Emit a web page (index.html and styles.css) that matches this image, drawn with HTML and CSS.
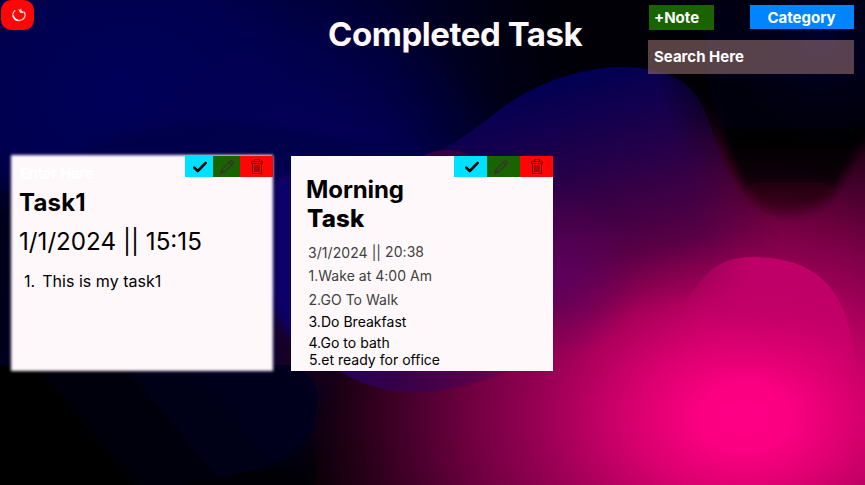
FILE: index.html
```
<!DOCTYPE html>
<html lang="en">
<head>
<meta charset="utf-8">
<title>Completed Task</title>
<link rel="stylesheet" href="styles.css">
</head>
<body>
<svg class="backdrop" viewBox="0 0 865 485" preserveAspectRatio="none" aria-hidden="true">
  <defs>
    <radialGradient id="blue" gradientUnits="userSpaceOnUse" cx="130" cy="95" r="450" gradientTransform="translate(0 20) scale(1 .8)">
      <stop offset="0" stop-color="#00005a"/><stop offset=".3" stop-color="#000050"/><stop offset=".6" stop-color="#000040" stop-opacity=".75"/><stop offset="1" stop-color="#000030" stop-opacity="0"/>
    </radialGradient>
    <radialGradient id="mid" gradientUnits="userSpaceOnUse" cx="300" cy="235" r="240">
      <stop offset="0" stop-color="#0c0068"/><stop offset=".4" stop-color="#04005a"/><stop offset="1" stop-color="#000050" stop-opacity="0"/>
    </radialGradient>
    <radialGradient id="pink" gradientUnits="userSpaceOnUse" cx="745" cy="0" r="460" gradientTransform="translate(0 418) scale(1 .72)">
      <stop offset="0" stop-color="#ff0084"/><stop offset=".1" stop-color="#fb0081"/><stop offset=".24" stop-color="#d8006e"/><stop offset=".44" stop-color="#9a0055"/><stop offset=".58" stop-color="#750043"/><stop offset=".7" stop-color="#500031"/><stop offset=".83" stop-color="#2a001a"/><stop offset="1" stop-color="#080006" stop-opacity="0"/>
    </radialGradient>
    <linearGradient id="wave" gradientUnits="userSpaceOnUse" x1="560" y1="82" x2="625" y2="320">
      <stop offset="0" stop-color="#020052"/><stop offset=".3" stop-color="#1e004b"/><stop offset=".55" stop-color="#3c0044"/><stop offset=".75" stop-color="#520046" stop-opacity=".8"/><stop offset="1" stop-color="#80004e" stop-opacity="0"/>
    </linearGradient>
    <linearGradient id="wavefade" gradientUnits="userSpaceOnUse" x1="680" y1="155" x2="750" y2="132">
      <stop offset="0" stop-color="#fff"/><stop offset="1" stop-color="#000"/>
    </linearGradient>
    <mask id="wavemask" maskUnits="userSpaceOnUse" x="300" y="50" width="565" height="350"><rect x="300" y="50" width="565" height="350" fill="url(#wavefade)"/></mask>
    <linearGradient id="tail" gradientUnits="userSpaceOnUse" x1="290" y1="320" x2="540" y2="350">
      <stop offset="0" stop-color="#12005e"/><stop offset=".45" stop-color="#36004a"/><stop offset=".75" stop-color="#500050" stop-opacity=".7"/><stop offset="1" stop-color="#780050" stop-opacity="0"/>
    </linearGradient>
    <radialGradient id="violet" gradientUnits="userSpaceOnUse" cx="555" cy="275" r="85">
      <stop offset="0" stop-color="#5c0064" stop-opacity=".8"/><stop offset="1" stop-color="#5c0060" stop-opacity="0"/>
    </radialGradient>
    <linearGradient id="dome" gradientUnits="userSpaceOnUse" x1="760" y1="257" x2="755" y2="370">
      <stop offset="0" stop-color="#be0068"/><stop offset=".5" stop-color="#c5006a" stop-opacity=".85"/><stop offset="1" stop-color="#e60078" stop-opacity="0"/>
    </linearGradient>
    <linearGradient id="domefade" gradientUnits="userSpaceOnUse" x1="665" y1="0" x2="750" y2="0">
      <stop offset="0" stop-color="#000"/><stop offset="1" stop-color="#fff"/>
    </linearGradient>
    <mask id="domemask" maskUnits="userSpaceOnUse" x="640" y="240" width="240" height="150"><rect x="640" y="240" width="240" height="150" fill="url(#domefade)"/></mask>
    <linearGradient id="navy" gradientUnits="userSpaceOnUse" x1="80" y1="470" x2="210" y2="360">
      <stop offset="0" stop-color="#000001"/><stop offset="1" stop-color="#00001d"/>
    </linearGradient>
    <linearGradient id="night" gradientUnits="userSpaceOnUse" x1="790" y1="60" x2="790" y2="216">
      <stop offset="0" stop-color="#000016"/><stop offset=".45" stop-color="#000006"/><stop offset=".7" stop-color="#040004" stop-opacity=".85"/><stop offset="1" stop-color="#140008" stop-opacity=".4"/>
    </linearGradient>
    <radialGradient id="corner" gradientUnits="userSpaceOnUse" cx="820" cy="40" r="110">
      <stop offset="0" stop-color="#000030"/><stop offset="1" stop-color="#000008" stop-opacity="0"/>
    </radialGradient>
    <filter id="b1"><feGaussianBlur stdDeviation=".7"/></filter>
    <filter id="b4" x="-20%" y="-20%" width="140%" height="140%"><feGaussianBlur stdDeviation="5"/></filter>
    <filter id="b12" x="-50%" y="-50%" width="200%" height="200%"><feGaussianBlur stdDeviation="14"/></filter>
  </defs>
  <rect width="865" height="485" fill="#000006"/>
  <rect width="865" height="485" fill="url(#blue)"/>
  <rect width="560" height="485" fill="url(#mid)"/>
  <path d="M-30 210Q120 110 240 122Q330 130 430 160L400 330Q340 380 280 370L-30 380Z" fill="#000048" fill-opacity=".8" filter="url(#b4)"/>
  <path d="M-20 190H25V380H-20Z" fill="#000014" filter="url(#b12)"/>
  <path d="M272 180L300 170V360L272 320Z" fill="#100068" filter="url(#b4)"/>
  <path d="M272 300Q285 350 340 380L272 395Z" fill="#190026" filter="url(#b4)"/>
  <path d="M325 370H600V510H325Z" fill="#150010" filter="url(#b12)"/>
  <rect width="865" height="485" fill="url(#pink)"/>
  <path d="M425 157C465 142 480 121 520 96C560 73 600 66 625 67C668 68 690 82 701 103C715 132 725 181 752 207C780 225 785 260 780 340H510L330 365V155Z" fill="url(#wave)" mask="url(#wavemask)"/>
  <rect x="460" y="180" width="200" height="200" fill="url(#violet)"/>
  <path d="M423 156Q446 144 472 156Z" fill="#350042" filter="url(#b1)"/>
  <path d="M290 330H560V350C500 375 450 396 405 392C370 389 346 377 330 365Z" fill="url(#tail)" filter="url(#b1)"/>
  <path d="M705 66C716 108 726 168 752 200C770 221 805 215 825 202C845 185 855 145 880 125V0H705Z" fill="url(#night)" filter="url(#b4)"/>
  <rect x="700" width="165" height="190" fill="url(#corner)"/>
  <path d="M665 375C680 315 693 257 752 257C813 257 835 286 846 317Q853 342 858 380Z" fill="url(#dome)" mask="url(#domemask)"/>
  <path d="M-10 365H290Q322 376 317 405C315 435 295 458 262 468Q235 476 200 480L140 500H-10Z" fill="url(#navy)" filter="url(#b1)"/>
</svg>

<svg class="symbols" aria-hidden="true">
  <symbol id="check" viewBox="0 0 14 12"><path d="M1.3 6.6 4.8 10 12.7 1.9" fill="none" stroke="#000" stroke-width="2.6" stroke-linecap="round" stroke-linejoin="round"/></symbol>
  <symbol id="pencil" viewBox="0 0 14 14"><path d="M.8 13.2 1.7 9.7 10 1.4Q11.4.2 12.6 1.4T12.5 4L4.2 12.3ZM1.7 9.7 4.2 12.3M9.2 2.2 11.8 4.8" fill="none" stroke="#3b2c32" stroke-width="1.15"/></symbol>
  <symbol id="trash" viewBox="0 0 12 15"><path d="M.5 2.5H11.5V4.5H.5ZM3.5 2.5V.5H8.5V2.5M1.5 4.5V14.5H10.5V4.5M4 6V13M6 6V13M8 6V13" fill="none" stroke="#5a1212" stroke-width="1"/></symbol>
</svg>

<main class="page">
  <header class="header">
    <button class="power" aria-label="Home">
      <svg width="16" height="16" viewBox="0 0 16 16" fill="none"><path d="M4.2 3.2C1.6 5.5 1.3 9 3.2 11.4C5.8 14.6 11.4 14.1 13.4 10.6C14.4 8.7 14.2 6.5 13 4.8" stroke="#ffc5c5" stroke-width="1.4"/><path d="M2.2 8.5Q3 12.5 7 13.4" stroke="#fff" stroke-width="1.5"/><path d="M7 2 9 5.7 12 6.2 12.7 4.5 10.8 4 10 1.2 9 3Z" fill="#ffd7d7"/></svg>
    </button>
    <h1 class="title">Completed Task</h1>
    <div class="tools">
      <div class="buttons">
        <button class="note">+Note</button>
        <button class="category">Category</button>
      </div>
      <div class="search">Search Here</div>
    </div>
  </header>

  <section class="cards">
    <article class="card card-soft">
      <div class="actions actions-narrow">
        <span class="done"><svg width="14" height="12"><use href="#check"/></svg></span>
        <span class="edit"><svg width="14" height="14"><use href="#pencil"/></svg></span>
        <span class="delete"><svg width="12" height="15"><use href="#trash"/></svg></span>
      </div>
      <div class="hint">Enter Here</div>
      <h2 class="name">Task1</h2>
      <div class="date">1/1/2024 || 15:15</div>
      <div class="entry"><span class="number">1.</span><span>This is my task1</span></div>
    </article>

    <article class="card card-plain">
      <div class="actions">
        <span class="done"><svg width="14" height="12"><use href="#check"/></svg></span>
        <span class="edit"><svg width="14" height="14"><use href="#pencil"/></svg></span>
        <span class="delete"><svg width="12" height="15"><use href="#trash"/></svg></span>
      </div>
      <h2 class="morning">Morning</h2>
      <h2 class="task">Task</h2>
      <div class="when"><span>3/1/2024 ||</span><span class="time">20:38</span></div>
      <div class="step step-1">1.Wake at 4:00 Am</div>
      <div class="step step-2">2.GO To Walk</div>
      <div class="step step-3">3.Do Breakfast</div>
      <div class="step step-4">4.Go to bath</div>
      <div class="step step-5">5.et ready for office</div>
    </article>
  </section>
</main>
</body>
</html>
```
FILE: styles.css
```
* { box-sizing: border-box; }
body { margin: 0; width: 865px; height: 485px; overflow: hidden; background: #000008; font-family: Inter, sans-serif; color: #000; }
.backdrop { position: absolute; top: 0; left: 0; width: 865px; height: 485px; }
.symbols { position: absolute; width: 0; height: 0; }
.page { position: relative; height: 485px; }
h1, h2 { margin: 0; white-space: nowrap; }
button { border: 0; padding: 0; margin: 0; font: inherit; color: inherit; }

.header { display: flex; height: 155px; padding-left: 1px; align-items: flex-start; }
.power { display: flex; width: 33px; height: 30px; border-radius: 10px; background: #ff0505; padding: 7px 0 0 10px; }
.title { width: 320px; margin: 14px 0 0 294px; font-size: 33px; line-height: 40px; font-weight: 650; letter-spacing: -.45px; color: #fff9fb; }
.tools { width: 206px; padding-top: 5px; color: #fff; font-size: 15px; font-weight: 700; }
.buttons { display: flex; justify-content: space-between; align-items: flex-start; height: 35px; padding-left: 1px; }
.note { width: 65px; height: 25px; padding-left: 5px; text-align: left; background: #196400; }
.category { width: 104px; height: 24px; background: #0085ff; padding-right: 1px; }
.search { height: 34px; padding-left: 6px; line-height: 34px; background: rgba(155, 116, 116, .56); }

.cards { display: flex; gap: 18px; padding-left: 11px; }
.card { position: relative; width: 262px; height: 216px; }
.card-soft { padding: 9px 0 0 9px; }
.card-soft::before { content: ""; position: absolute; inset: 0; background: #fff8fa; filter: blur(1.5px); }
.card-soft > * { position: relative; }
.card-plain { margin-top: 1px; height: 215px; padding: 19px 0 0 17px; background: #fff8fa; }
.card .actions { position: absolute; top: 0; right: 0; display: grid; grid-template-columns: 33px 33px 33px; height: 21px; }
.card .actions-narrow { top: 1px; grid-template-columns: 28px 27px 33px; }
.actions span { display: flex; align-items: center; justify-content: center; }
.done { background: #00e0ff; padding-left: 2px; }
.edit { background: #196400; }
.delete { background: #ff0505; padding-left: 1px; }
.card-plain .edit { padding-right: 5px; }
.hint { font-size: 15px; line-height: 20px; font-weight: 700; letter-spacing: -.4px; color: #fff; }
.name { margin: 4px 0 0 -1px; font-size: 24px; line-height: 30px; font-weight: 700; letter-spacing: .2px; }
.date { margin: 9px 0 0 -1px; font-size: 24.2px; line-height: 30px; white-space: nowrap; }
.entry { display: flex; gap: 7px; margin: 14px 0 0 4px; font-size: 16px; line-height: 20px; letter-spacing: .03px; }

.morning, .task { font-size: 24px; line-height: 30px; }
.morning { margin-left: -2px; letter-spacing: -.1px; }
.task { margin: -1px 0 0 -1px; font-weight: 800; letter-spacing: .2px; }
.when { display: flex; gap: 4px; margin-top: 9px; font-size: 14px; line-height: 20px; letter-spacing: .06px; color: #404040; }
.time { margin-top: -1px; }
.step { margin-left: .5px; font-size: 14px; line-height: 20px; letter-spacing: .02px; white-space: nowrap; }
.step-1, .step-2 { color: #404040; }
.step-1 { margin-top: 3px; }
.step-2 { margin-top: 4px; }
.step-3 { margin-top: 2px; }
.step-4 { margin-top: 1px; }
.step-5 { margin: -3px 0 0 1px; }
```
